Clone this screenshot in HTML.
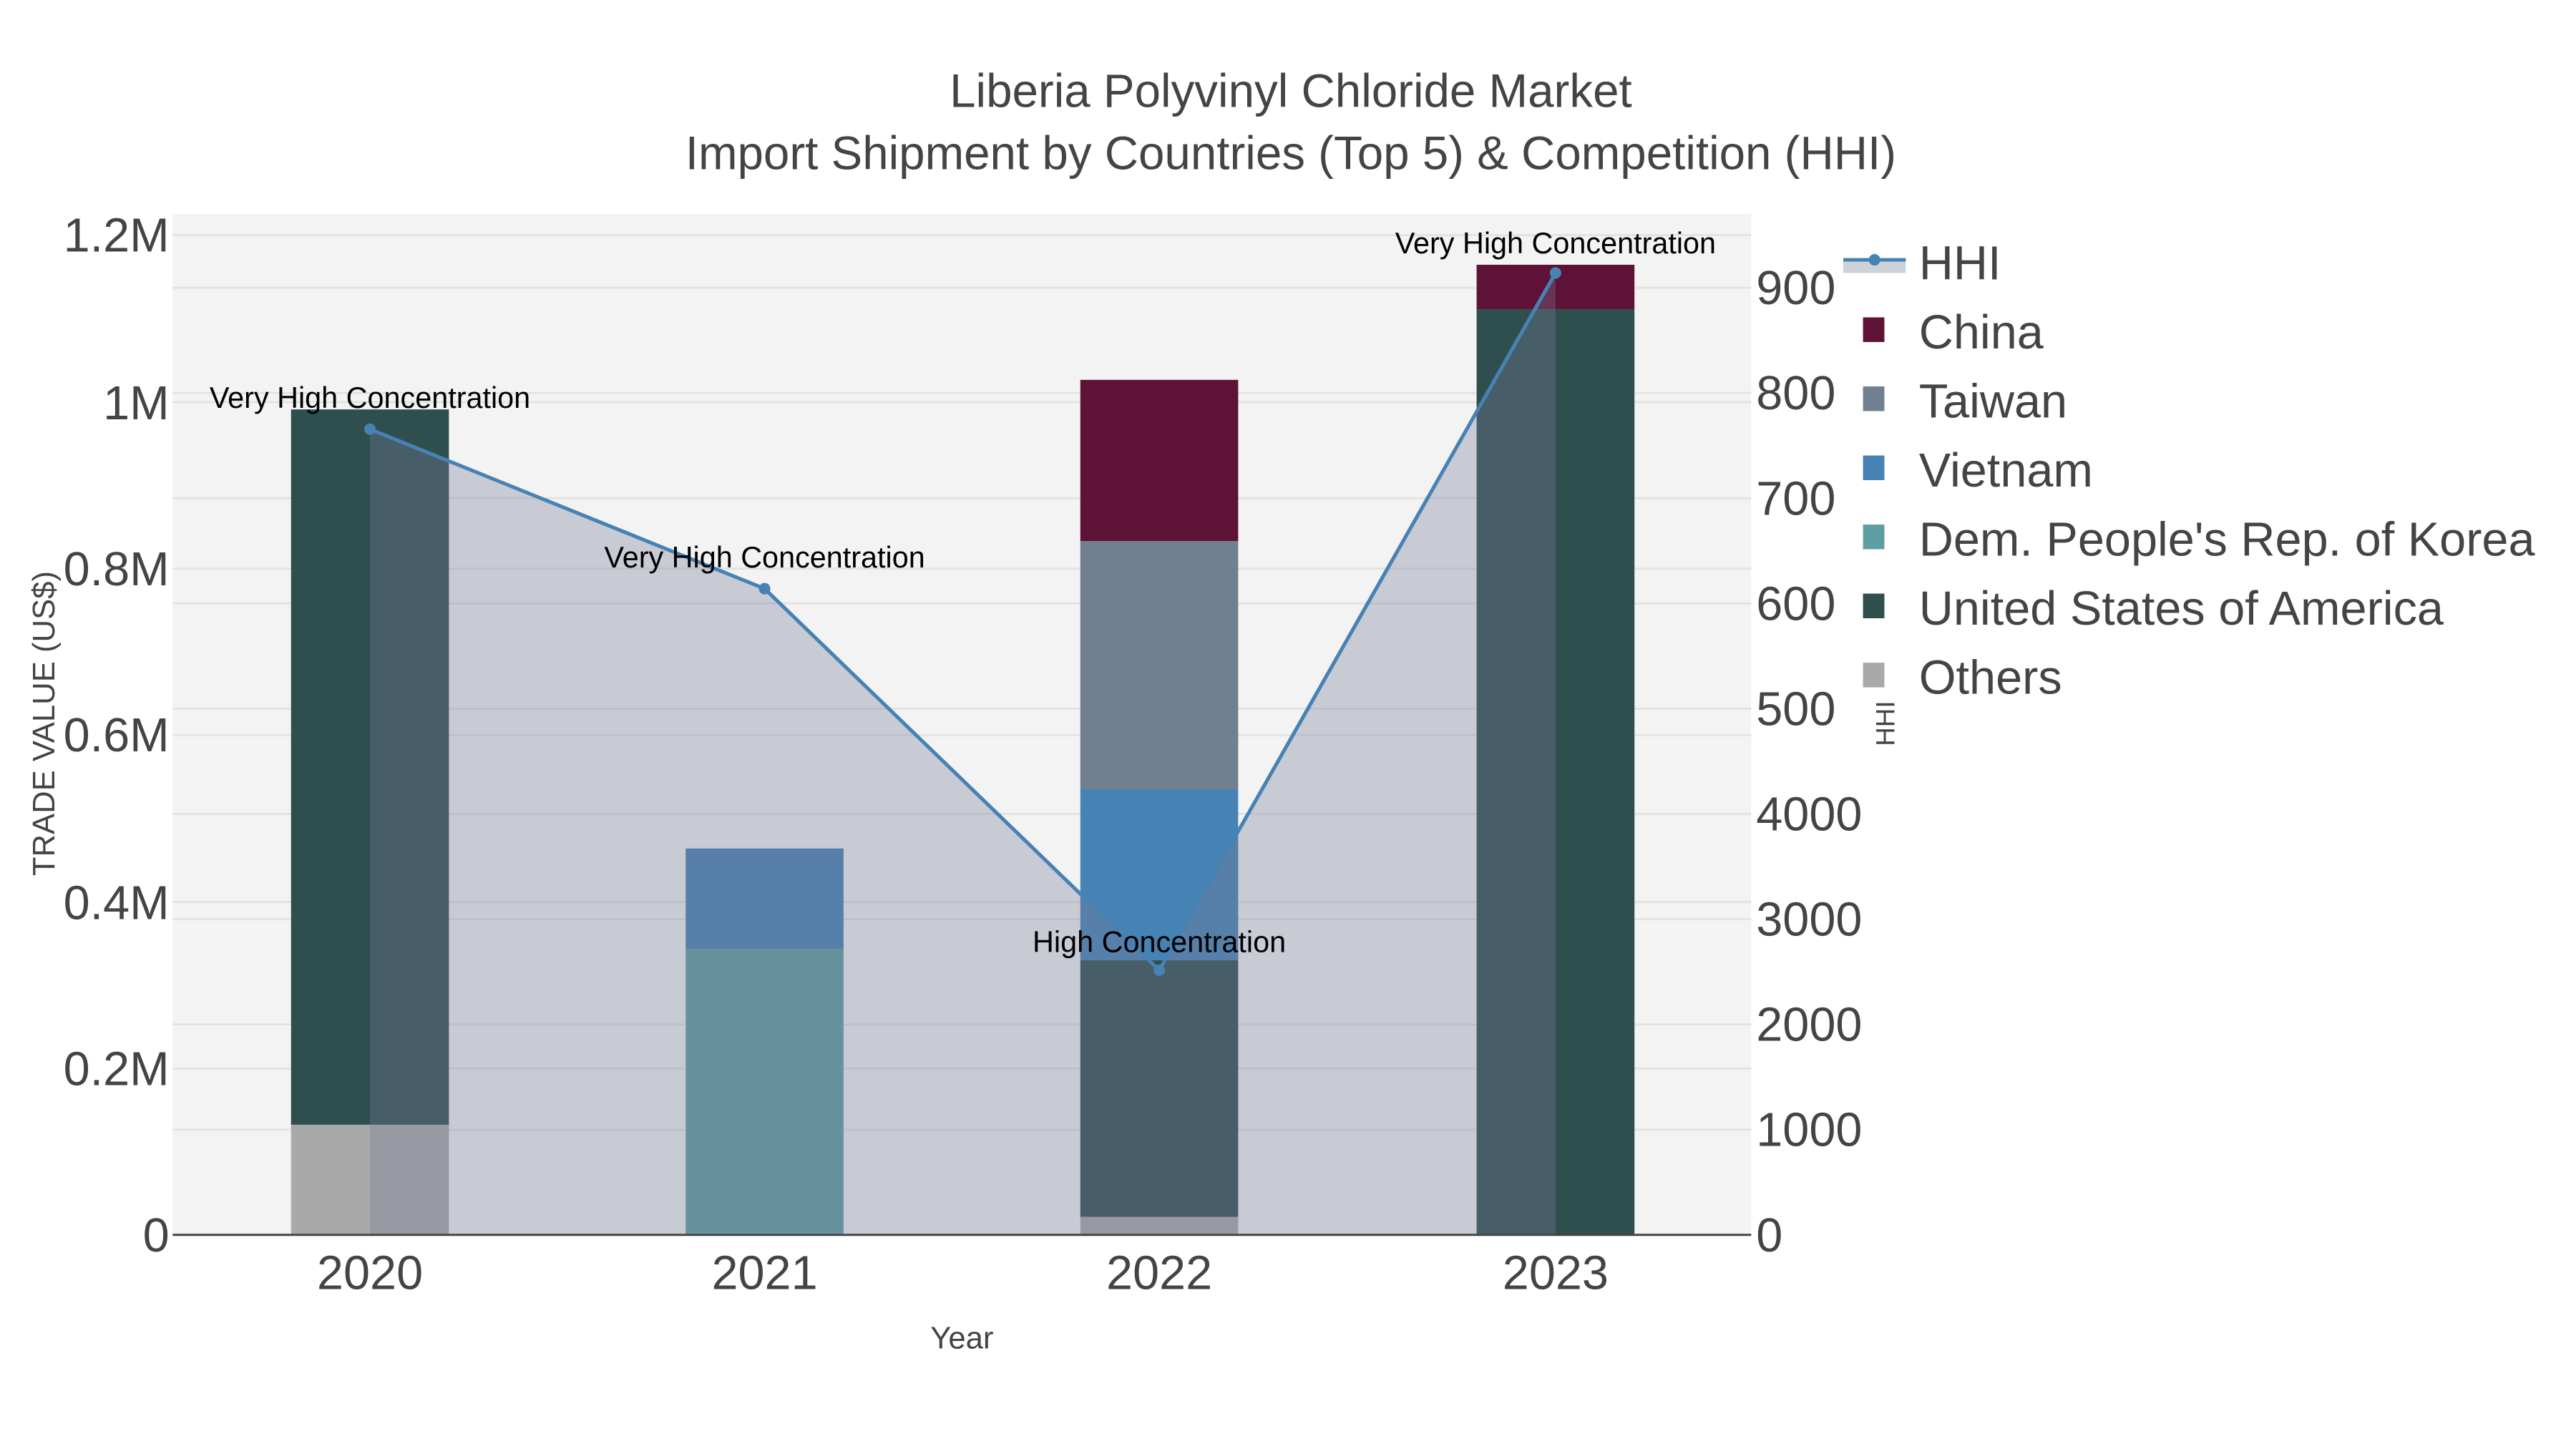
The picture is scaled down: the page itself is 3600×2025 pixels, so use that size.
<!DOCTYPE html>
<html><head><meta charset="utf-8"><style>
html,body{margin:0;padding:0;background:#fff;}
svg{display:block;}
text{font-family:"Liberation Sans",sans-serif;}
</style></head><body>
<svg width="3600" height="2025" viewBox="0 0 1566.6 881.2" xmlns="http://www.w3.org/2000/svg">
<rect x="0" y="0" width="1570" height="882" fill="#fff"/>
<rect x="105" y="130" width="960" height="621" fill="#f3f3f3"/>
<g stroke="#e2e2e2" stroke-width="1.2">
<line x1="105" x2="1065" y1="143" y2="143"/>
<line x1="105" x2="1065" y1="244.5" y2="244.5"/>
<line x1="105" x2="1065" y1="345.8" y2="345.8"/>
<line x1="105" x2="1065" y1="447" y2="447"/>
<line x1="105" x2="1065" y1="548.5" y2="548.5"/>
<line x1="105" x2="1065" y1="649.8" y2="649.8"/>
<line x1="105" x2="1065" y1="175" y2="175"/>
<line x1="105" x2="1065" y1="239" y2="239"/>
<line x1="105" x2="1065" y1="303" y2="303"/>
<line x1="105" x2="1065" y1="367" y2="367"/>
<line x1="105" x2="1065" y1="431" y2="431"/>
<line x1="105" x2="1065" y1="495" y2="495"/>
<line x1="105" x2="1065" y1="559" y2="559"/>
<line x1="105" x2="1065" y1="623" y2="623"/>
<line x1="105" x2="1065" y1="687" y2="687"/>
</g>
<rect x="177" y="684" width="96" height="67" fill="#a9a9a9"/>
<rect x="177" y="249" width="96" height="435" fill="#2f4f4f"/>
<rect x="417" y="577" width="96" height="174" fill="#5f9ea0"/>
<rect x="417" y="516" width="96" height="61" fill="#4682b4"/>
<rect x="657" y="740" width="96" height="11" fill="#a9a9a9"/>
<rect x="657" y="584" width="96" height="156" fill="#2f4f4f"/>
<rect x="657" y="480" width="96" height="104" fill="#4682b4"/>
<rect x="657" y="329" width="96" height="151" fill="#708090"/>
<rect x="657" y="231" width="96" height="98" fill="#5e1235"/>
<rect x="898" y="188" width="96" height="563" fill="#2f4f4f"/>
<rect x="898" y="161" width="96" height="27" fill="#5e1235"/>
<polygon points="225,261 465,358 705,590 946,166 946,751 225,751" fill="rgba(117,124,152,0.34)"/>
<polyline points="225,261 465,358 705,590 946,166" fill="none" stroke="#4682b4" stroke-width="2.2"/>
<g fill="#4682b4"><circle cx="225" cy="261" r="3.5"/><circle cx="465" cy="358" r="3.5"/><circle cx="705" cy="590" r="3.5"/><circle cx="946" cy="166" r="3.5"/></g>
<line x1="105" x2="1065" y1="751" y2="751" stroke="#444" stroke-width="1.3"/>
<g font-size="18" fill="#000" text-anchor="middle">
<text x="225" y="248">Very High Concentration</text>
<text x="465" y="345">Very High Concentration</text>
<text x="705" y="579">High Concentration</text>
<text x="946" y="154">Very High Concentration</text>
</g>
<g fill="#444" text-anchor="middle" font-size="28.5">
<text x="785" y="65">Liberia Polyvinyl Chloride Market</text>
<text x="785" y="103">Import Shipment by Countries (Top 5) &amp; Competition (HHI)</text>
</g>
<g fill="#444" font-size="29" text-anchor="end">
<text x="103" y="153">1.2M</text>
<text x="103" y="255">1M</text>
<text x="103" y="356">0.8M</text>
<text x="103" y="457">0.6M</text>
<text x="103" y="559">0.4M</text>
<text x="103" y="660">0.2M</text>
<text x="103" y="761">0</text>
</g>
<g fill="#444" font-size="29" text-anchor="start">
<text x="1068" y="185">900</text>
<text x="1068" y="249">800</text>
<text x="1068" y="313">700</text>
<text x="1068" y="377">600</text>
<text x="1068" y="441">500</text>
<text x="1068" y="505">4000</text>
<text x="1068" y="569">3000</text>
<text x="1068" y="633">2000</text>
<text x="1068" y="697">1000</text>
<text x="1068" y="761">0</text>
</g>
<g fill="#444" font-size="29" text-anchor="middle">
<text x="225" y="784">2020</text>
<text x="465" y="784">2021</text>
<text x="705" y="784">2022</text>
<text x="946" y="784">2023</text>
</g>
<text x="585" y="820" fill="#444" font-size="19" text-anchor="middle">Year</text>
<text transform="translate(33,440) rotate(-90)" fill="#444" font-size="19" text-anchor="middle">TRADE VALUE (US$)</text>
<text transform="translate(1152,440) rotate(-90)" fill="#444" font-size="16" text-anchor="middle">HHI</text>
<rect x="1121" y="158" width="38" height="8" fill="#cdd2d9"/>
<line x1="1121" x2="1159" y1="158" y2="158" stroke="#4682b4" stroke-width="2.2"/>
<circle cx="1140" cy="158" r="3.5" fill="#4682b4"/>
<rect x="1133" y="193" width="13" height="15" fill="#5e1235"/>
<rect x="1133" y="235" width="13" height="15" fill="#708090"/>
<rect x="1133" y="277" width="13" height="15" fill="#4682b4"/>
<rect x="1133" y="319" width="13" height="15" fill="#5f9ea0"/>
<rect x="1133" y="361" width="13" height="15" fill="#2f4f4f"/>
<rect x="1133" y="403" width="13" height="15" fill="#a9a9a9"/>
<g fill="#444" font-size="29">
<text x="1167" y="170">HHI</text>
<text x="1167" y="212">China</text>
<text x="1167" y="254">Taiwan</text>
<text x="1167" y="296">Vietnam</text>
<text x="1167" y="338">Dem. People's Rep. of Korea</text>
<text x="1167" y="380">United States of America</text>
<text x="1167" y="422">Others</text>
</g>
</svg>
</body></html>
